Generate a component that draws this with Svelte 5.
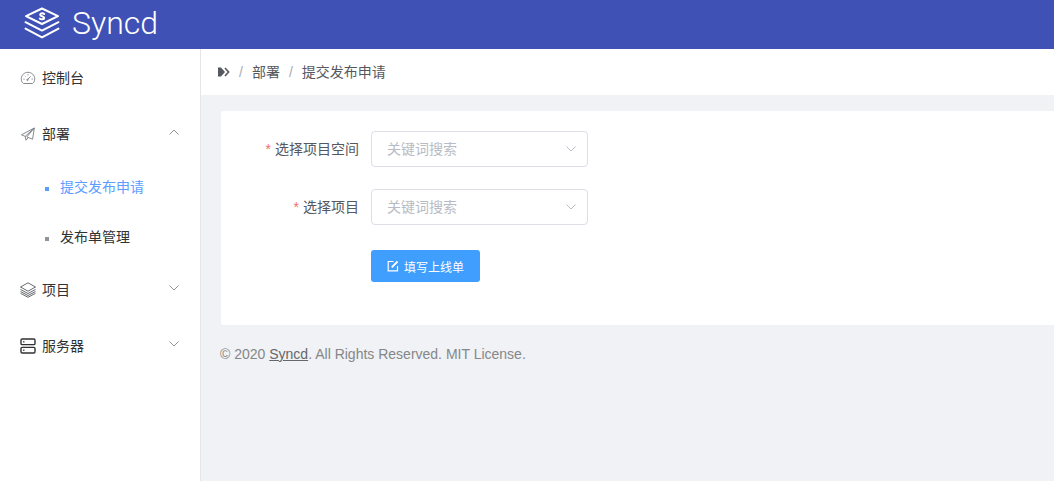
<script>
  const submenu = [
    { label: '提交发布申请', active: true },
    { label: '发布单管理', active: false }
  ];
  const fields = [
    { id: 'space', label: '选择项目空间' },
    { id: 'project', label: '选择项目' }
  ];
</script>

{#snippet chevron(up)}
  <svg class="chevron" width="12" height="12" viewBox="0 0 12 12" aria-hidden="true">
    <path d={up ? 'M1.5 8.5 6 4 10.5 8.5' : 'M1.5 3.5 6 8 10.5 3.5'} />
  </svg>
{/snippet}

<div class="app">
  <header>
    <a class="brand" href="#home">
      <svg width="36" height="32" viewBox="0 0 36 32" aria-hidden="true">
        <path d="M18 1.5 34 9.2 18 17 2 9.2Z" />
        <path d="M1.5 15.2 18 23.6 34.5 15.2M1.5 21.6 18 30.4 34.5 21.6" />
        <path class="mark" d="M20.2 7C19.2 6 16.2 6 16.2 7.7 16.2 9.5 20.2 8.9 20.2 11 20.2 12.7 16.8 12.6 15.8 11.6" />
      </svg>
      <span>Syncd</span>
    </a>
  </header>

  <div class="body">
    <nav>
      <a class="item" href="#dashboard">
        <svg class="icon gray" width="16" height="16" viewBox="0 0 16 16" aria-hidden="true">
          <path d="M3.4 13.5C1.9 12.5 1.3 10.8 1.3 8.8 1.3 5.2 4.3 2.3 8 2.3S14.7 5.2 14.7 8.8C14.7 10.8 14.1 12.5 12.6 13.5Z" />
          <path d="M7.6 9.6 10.6 6.4M3.4 9H4.6M11.6 9H12.8M8 4.2V5.3M4.8 5.8 5.5 6.5" />
          <circle cx="7.5" cy="9.8" r=".7" />
        </svg>
        <span>控制台</span>
      </a>
      <button class="item" aria-expanded="true">
        <svg class="icon gray" width="16" height="16" viewBox="0 0 16 16" aria-hidden="true">
          <path d="M14.3 2 1.5 8.8 5.2 10.4 14.3 2 12.6 13.2 8.2 11.5M5.2 10.4 6 14.2 8.2 11.5 6.8 10.9 14.3 2" />
        </svg>
        <span>部署</span>
        {@render chevron(true)}
      </button>
      <ul>
        {#each submenu as entry}
          <li><a class:active={entry.active} href="#deploy"><i></i><span>{entry.label}</span></a></li>
        {/each}
      </ul>
      <button class="item" aria-expanded="false">
        <svg class="icon" width="16" height="16" viewBox="0 0 16 16" aria-hidden="true">
          <path d="M8 .8 15.5 5 8 9.2.5 5Z" />
          <path d="M.5 7.5 8 11.5 15.5 7.5M.5 9.5 8 13.5 15.5 9.5M.5 11.3 8 15.3 15.5 11.3" />
        </svg>
        <span>项目</span>
        {@render chevron(false)}
      </button>
      <button class="item" aria-expanded="false">
        <svg class="icon dark" width="16" height="16" viewBox="0 0 16 16" aria-hidden="true">
          <rect x="1" y="1" width="14" height="5.6" rx="1.2" />
          <rect x="1" y="9.4" width="14" height="5.6" rx="1.2" />
          <path d="M3.2 3.8H4.4M3.2 12.2H4.4" />
        </svg>
        <span>服务器</span>
        {@render chevron(false)}
      </button>
    </nav>

    <div class="content">
      <div class="crumbs">
        <button class="toggle" aria-label="菜单">
          <svg width="12" height="10" viewBox="0 0 12 10" aria-hidden="true">
            <path class="solid" d="M0 .5H3L7 5 3 9.5H0Z" />
            <path d="M7 1 10.6 5 7 9" />
          </svg>
        </button>
        <b>/</b><span>部署</span><b>/</b><span>提交发布申请</span>
      </div>

      <main>
        <form>
          {#each fields as field}
            <div class="row">
              <label for={field.id}><em>*</em>{field.label}</label>
              <div class="select">
                <select id={field.id}><option>关键词搜索</option></select>
                {@render chevron(false)}
              </div>
            </div>
          {/each}
          <div class="row actions">
            <button class="primary" type="button">
              <svg width="12" height="12" viewBox="0 0 12 12" aria-hidden="true">
                <path d="M6.5 1.5H1.2V10.8H10.5V6" />
                <path class="pen" d="M4.8 7.3 10.5 1.5" />
              </svg>
              <span>填写上线单</span>
            </button>
          </div>
        </form>
      </main>

      <footer>© 2020 <a href="#syncd">Syncd</a>. All Rights Reserved. MIT License.</footer>
    </div>
  </div>
</div>

<style>
  :global(body) {
    margin: 0;
  }
  .app {
    display: flex;
    flex-direction: column;
    min-height: 100vh;
    font-family: "Liberation Sans", "Noto Sans CJK SC", sans-serif;
    font-size: 14px;
    color: #303133;
  }
  .app * {
    box-sizing: border-box;
  }
  a {
    color: inherit;
    text-decoration: none;
  }
  button {
    font: inherit;
    color: inherit;
    background: none;
    border: 0;
    padding: 0;
    cursor: pointer;
  }
  svg {
    flex: none;
    fill: none;
    stroke: currentColor;
  }
  header {
    display: flex;
    height: 49px;
    padding-left: 24px;
    background: #3f51b5;
    color: #fff;
  }
  .brand {
    display: flex;
    align-items: center;
    gap: 12px;
    padding-bottom: 4px;
  }
  .brand svg {
    stroke-width: 2;
    stroke-linejoin: round;
    stroke-linecap: round;
  }
  .brand span {
    font: 300 32px/44px Roboto, sans-serif;
  }
  .body {
    display: flex;
    flex: 1;
  }
  nav {
    flex: none;
    width: 201px;
    padding-top: 1px;
    border-right: 1px solid #e6e6e6;
    background: #fff;
  }
  .item {
    display: flex;
    align-items: center;
    gap: 6px;
    width: 100%;
    height: 56px;
    padding: 0 20px;
  }
  nav span,
  .crumbs span,
  label {
    padding-bottom: 2px;
  }
  .icon {
    color: #55585e;
    stroke-width: 0.9;
  }
  .gray {
    color: #777a80;
  }
  .dark {
    color: #303133;
    stroke-width: 1.4;
  }
  .chevron {
    color: #909399;
  }
  .item .chevron {
    margin: 0 0 4px auto;
  }
  ul {
    list-style: none;
    margin: 0;
    padding: 0;
  }
  li a {
    display: flex;
    align-items: center;
    gap: 11px;
    height: 50px;
    padding-left: 45px;
  }
  li i {
    width: 4px;
    height: 4px;
    margin-top: 3px;
    background: #909399;
  }
  .active {
    color: #5c9dff;
  }
  .active i {
    background: #5c9dff;
  }
  .content {
    flex: 1;
    min-width: 0;
    background: #f0f2f5;
  }
  .crumbs {
    display: flex;
    align-items: center;
    height: 46px;
    padding-left: 17px;
    background: #fff;
    color: #55585e;
  }
  .crumbs b {
    margin: 0 9px;
    font-weight: 400;
    color: #a8abb2;
  }
  .toggle {
    display: flex;
  }
  .toggle svg {
    stroke-width: 1.6;
  }
  .toggle .solid {
    fill: currentColor;
    stroke: none;
  }
  main {
    margin: 16px 0 0 20px;
    padding: 20px;
    border-radius: 2px 0 0 2px;
    background: #fff;
  }
  form {
    display: flex;
    flex-direction: column;
    gap: 22px;
    padding-bottom: 22px;
  }
  .row {
    display: flex;
    align-items: center;
    height: 36px;
  }
  label {
    width: 130px;
    padding-right: 12px;
    text-align: right;
    color: #55585e;
  }
  em {
    margin-right: 4px;
    font-style: normal;
    color: #f56c6c;
  }
  .select {
    display: grid;
    align-items: center;
    width: 217px;
  }
  .select > :global(*) {
    grid-area: 1 / 1;
  }
  select {
    appearance: none;
    width: 100%;
    height: 36px;
    padding: 0 30px 0 15px;
    border: 1px solid #dcdfe6;
    border-radius: 4px;
    background: #fff;
    font: inherit;
    color: #b8bcc4;
  }
  .select .chevron {
    justify-self: end;
    margin-right: 11px;
    color: #b8bcc4;
    pointer-events: none;
  }
  .row.actions {
    align-items: flex-end;
    padding: 0 0 1px 130px;
  }
  .primary {
    display: flex;
    align-items: center;
    gap: 5px;
    height: 32px;
    padding: 0 16px;
    border-radius: 3px;
    background: #409eff;
    color: #fff;
    font-size: 12px;
  }
  .primary svg {
    stroke-width: 1.2;
  }
  .primary .pen {
    stroke-width: 1.9;
  }
  footer {
    padding: 20px 19px;
    line-height: 18px;
    color: #858789;
  }
  footer a {
    color: #64676b;
    text-decoration: underline;
  }
</style>
